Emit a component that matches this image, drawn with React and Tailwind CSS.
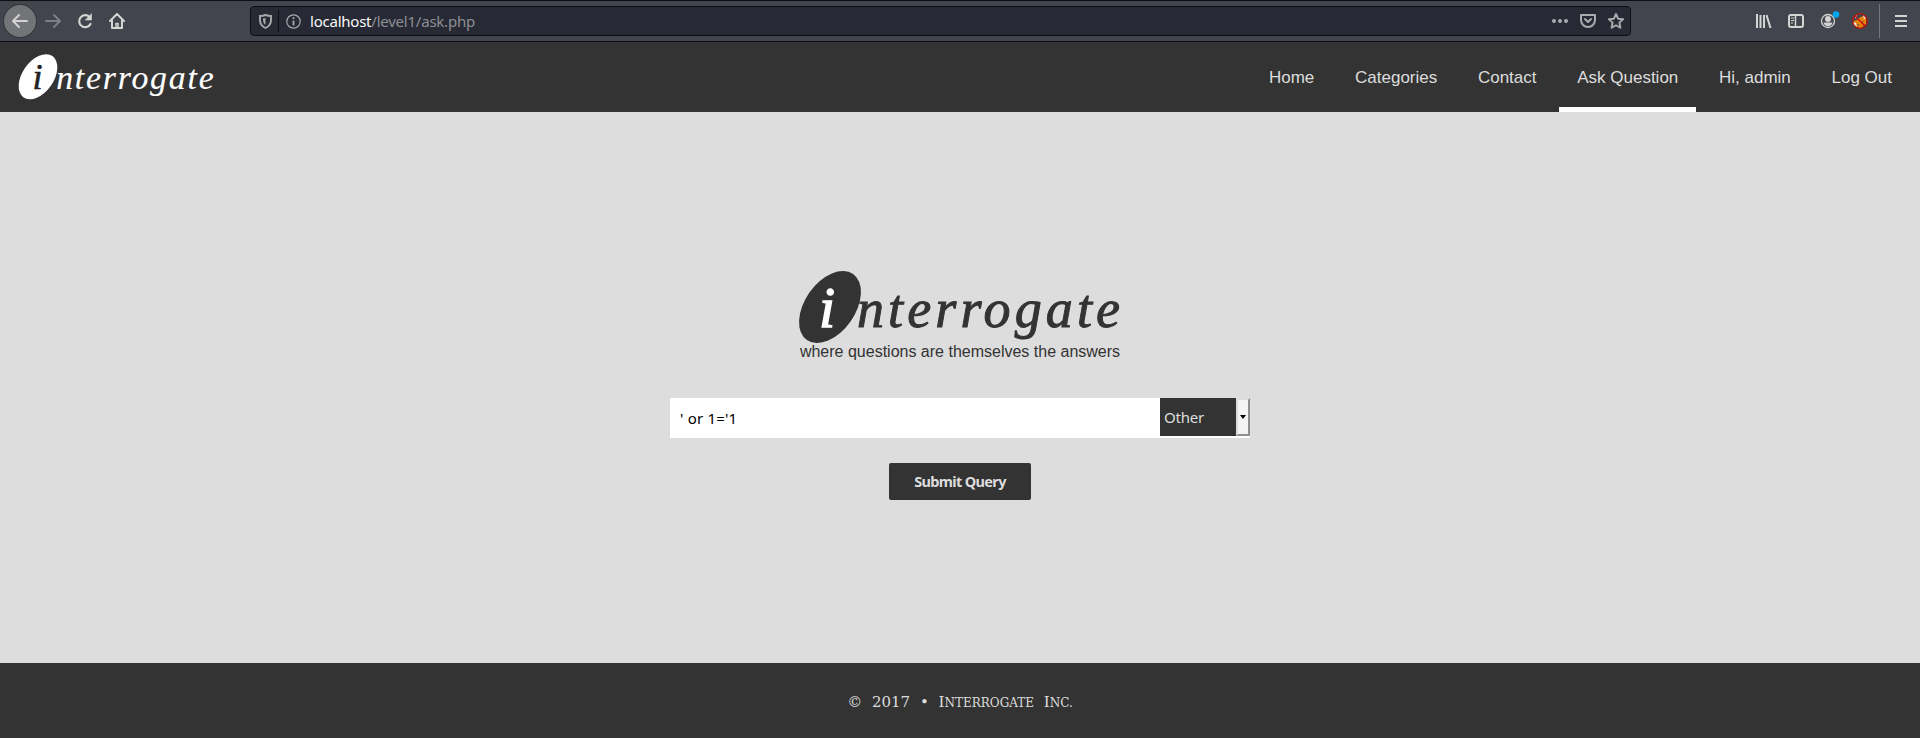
import React from "react";

function Logo({ small }) {
  const ink = small ? "#ffffff" : "#333333";
  const inner = small ? "#222222" : "#ffffff";
  return (
    <svg
      viewBox="0 0 324 76"
      className={
        small
          ? "h-[47.5px] w-[202.5px] overflow-visible font-['Liberation_Serif',serif] italic"
          : "h-[76px] w-[324px] overflow-visible font-['Liberation_Serif',serif] italic"
      }
    >
      <ellipse cx="32" cy="38" rx="25.1" ry="40.3" transform="rotate(35 32 38)" fill={ink} />
      <text x={small ? "23" : "21"} y="57.5" fontSize="58" fill={inner} stroke={inner} strokeWidth={small ? "0.9" : "1.4"}>i</text>
      <text x={small ? "61" : "59"} y={small ? "57.5" : "57.7"} fontSize="54" fill={ink} stroke={ink} strokeWidth={small ? "0.2" : "1"} textLength={small ? "252" : "263"}>nterrogate</text>
    </svg>
  );
}

function BrowserBar() {
  return (
    <div className="flex h-[42px] items-center border-t border-b border-[#0e0f13] bg-[#42454d] text-[#d4d4d2]">
      <div className="ml-1 flex h-8 w-8 items-center justify-center rounded-full bg-[#737477] ring-1 ring-[#34363b]">
        <svg width="18" height="16" viewBox="0 0 18 16" fill="none" stroke="currentColor" strokeWidth="2" strokeLinecap="round" strokeLinejoin="round"><path d="M16 8H2M8 2L2 8l6 6" /></svg>
      </div>
      <svg className="ml-2 text-[#7c7e83]" width="18" height="16" viewBox="0 0 18 16" fill="none" stroke="currentColor" strokeWidth="2" strokeLinecap="round" strokeLinejoin="round"><path d="M2 8h14M10 2l6 6-6 6" /></svg>
      <svg className="ml-[15px]" width="16" height="16" viewBox="0 0 16 16" fill="none" stroke="currentColor" strokeWidth="2.2" strokeLinecap="round"><path d="M13.500 11A6 6 0 1 1 12.500 4" /><path d="M14.500 1v6h-6z" fill="currentColor" strokeWidth="0.6" /></svg>
      <svg className="ml-4" width="16" height="16" viewBox="0 0 16 16" fill="none" stroke="currentColor" strokeWidth="2" strokeLinecap="round" strokeLinejoin="round"><path d="M1 8l7-7 7 7M3 7.500V15h10V7.500" /><path d="M7 15v-4.500h2V15" strokeWidth="1.500" /></svg>
      <div className="ml-[125px] flex h-[30px] w-[1381px] items-center rounded border border-[#0e0f13] bg-[#272935]">
        <svg className="ml-2" width="13" height="15" viewBox="0 0 13 15" fill="none" stroke="#a8a9ab" strokeWidth="1.900"><path d="M6.500 1c2 .8 3.700 1 5.500 1v4c0 4-2 6.500-5.500 8C3 12.500 1 10 1 6V2c1.800 0 3.500-.2 5.500-1z" /><path d="M6.500 4v7C4.500 9.500 4 8 4 4.500z" fill="#a8a9ab" stroke="none" /></svg>
        <div className="ml-[6px] h-[22px] w-px bg-[#0e0f13]" />
        <svg className="ml-[7px]" width="15" height="15" viewBox="0 0 15 15" fill="none" stroke="#a8a9ab" strokeWidth="1.200"><circle cx="7.500" cy="7.500" r="6.700" /><path d="M7.500 6.500v5M7.500 3.300v1.800" strokeWidth="1.800" /></svg>
        <div className="ml-[9px] font-['Noto_Sans',sans-serif] text-[15px] tracking-[-0.23px] whitespace-pre text-[#8e8f94]"><span className="text-[#f9f9fa]">localhost</span>/level1/ask.php</div>
        <div className="ml-auto mr-[6px] flex items-center gap-3 text-[#aaabad]">
          <svg width="16" height="4" viewBox="0 0 16 4" fill="currentColor"><circle cx="2" cy="2" r="2" /><circle cx="8" cy="2" r="2" /><circle cx="14" cy="2" r="2" /></svg>
          <svg width="16" height="14" viewBox="0 0 16 14" fill="none" stroke="currentColor" strokeWidth="2" strokeLinecap="round" strokeLinejoin="round"><path d="M1 1h14v5a7 7 0 0 1-14 0zM5 5l3 3 3-3" /></svg>
          <svg width="16" height="16" viewBox="0 0 16 16" fill="none" stroke="currentColor" strokeWidth="1.900" strokeLinejoin="round"><path d="M8 1l2.100 4.700 5 .5-3.700 3.400 1 5.200L8 12.200l-4.400 2.600 1-5.200L.9 6.200l5-.5z" /></svg>
        </div>
      </div>
      <svg className="ml-[125px]" width="16" height="14" viewBox="0 0 16 14" fill="none" stroke="currentColor" strokeWidth="2"><path d="M1 0v14M4.500 1v13M8 1v13M10.500 1l4 13" /></svg>
      <svg className="ml-4" width="16" height="14" viewBox="0 0 16 14" fill="none" stroke="currentColor" strokeWidth="2"><rect x="1" y="1" width="14" height="12" rx="2" /><path d="M7.500 1v12" strokeWidth="1.500" /><path d="M3 4h3M3 6.500h3M3 9h2" strokeWidth="1" /></svg>
      <svg className="ml-4" width="20" height="20" viewBox="0 0 20 20"><circle cx="8" cy="10" r="6.500" fill="none" stroke="#d4d4d2" strokeWidth="1.300" /><circle cx="8" cy="8" r="3" fill="#d4d4d2" /><path d="M3.500 11.500h9c-1 5-8 5-9 0z" fill="#d4d4d2" /><circle cx="16" cy="3.500" r="3.300" fill="#00a8f3" /></svg>
      <svg className="ml-3" width="16" height="16" viewBox="0 0 16 16"><path d="M2 8l3-1 2-2 4-2 3 2v6l-5 4-5-1-3-3z" fill="#e8820c" /><path d="M1 9l3 1 1 4-3-2zM2 3l3-1-1 4zM11 2l3 3-2 1z" fill="#e8e8e0" /><path d="M5 11l3 1-2 1zM10 8l2 1-2 1z" fill="#555" /><circle cx="8" cy="8" r="7.300" fill="none" stroke="#c3120c" strokeWidth="1.300" /><path d="M3 3l10 10" stroke="#c3120c" strokeWidth="1.400" /></svg>
      <div className="ml-[11px] h-[34px] w-px bg-[#74767b]" />
      <svg className="ml-[15px]" width="12" height="12" viewBox="0 0 12 12" stroke="currentColor" strokeWidth="2"><path d="M0 1h12M0 6h12M0 11h12" /></svg>
    </div>
  );
}

export default function App() {
  return (
    <div className="flex h-[738px] w-[1920px] flex-col overflow-hidden bg-[#dddddd] font-['Liberation_Sans',sans-serif]">
      <BrowserBar />
      <header className="flex h-[70px] items-start bg-[#333333] pr-[10px] pl-[17.5px]">
        <div className="pt-[11px]"><Logo small /></div>
        <nav className="ml-auto flex gap-[4.7px] text-[17px] text-[#dddddd]">
          {["Home", "Categories", "Contact", "Ask Question", "Hi, admin", "Log Out"].map((t) => (
            <a key={t} className={"flex h-[70px] items-center border-b-[5px] px-[18px] pt-[6px] whitespace-nowrap " + (t === "Ask Question" ? "border-white" : "border-transparent")}>{t}</a>
          ))}
        </nav>
      </header>
      <main className="flex h-[551px] flex-col items-center pt-[157px]">
        <Logo />
        <p className="-mt-[2px] text-[16px] leading-[18px] text-[#333333]">where questions are themselves the answers</p>
        <div className="mt-[37px] flex h-10 w-[580px] bg-white font-['Noto_Sans',sans-serif] text-[15px]">
          <div className="flex flex-1 items-center pl-[10px] tracking-[0.2px] text-black">' or 1='1</div>
          <div className="flex h-[38px] w-[76px] items-center bg-[#333333] pl-1 tracking-[-0.2px] text-[#dddddd]">Other</div>
          <div className="flex h-[38px] w-[14px] items-center justify-center border-2 border-t-[#dddddd] border-r-[#8f8f91] border-b-[#8f8f91] border-l-[#dddddd] bg-[#f4f4f4]"><svg className="shrink-0" width="6" height="4" viewBox="0 0 6 4"><path d="M0 0h6L3 4z" /></svg></div>
        </div>
        <button className="mt-[25px] h-[37px] w-[142px] rounded-[2px] bg-[#333333] font-['Noto_Sans',sans-serif] text-[14.5px] font-bold tracking-[-0.65px] text-[#dddddd]">Submit Query</button>
      </main>
      <footer className="flex h-[75px] items-center justify-center bg-[#333333] pt-[3px] font-['DejaVu_Serif',serif] text-[15px] whitespace-pre text-[#dddddd] [word-spacing:5px]">
        <span>© 2017 • I<span className="text-[12px] uppercase">nterrogate</span> I<span className="text-[12px] uppercase">nc.</span></span>
      </footer>
    </div>
  );
}
